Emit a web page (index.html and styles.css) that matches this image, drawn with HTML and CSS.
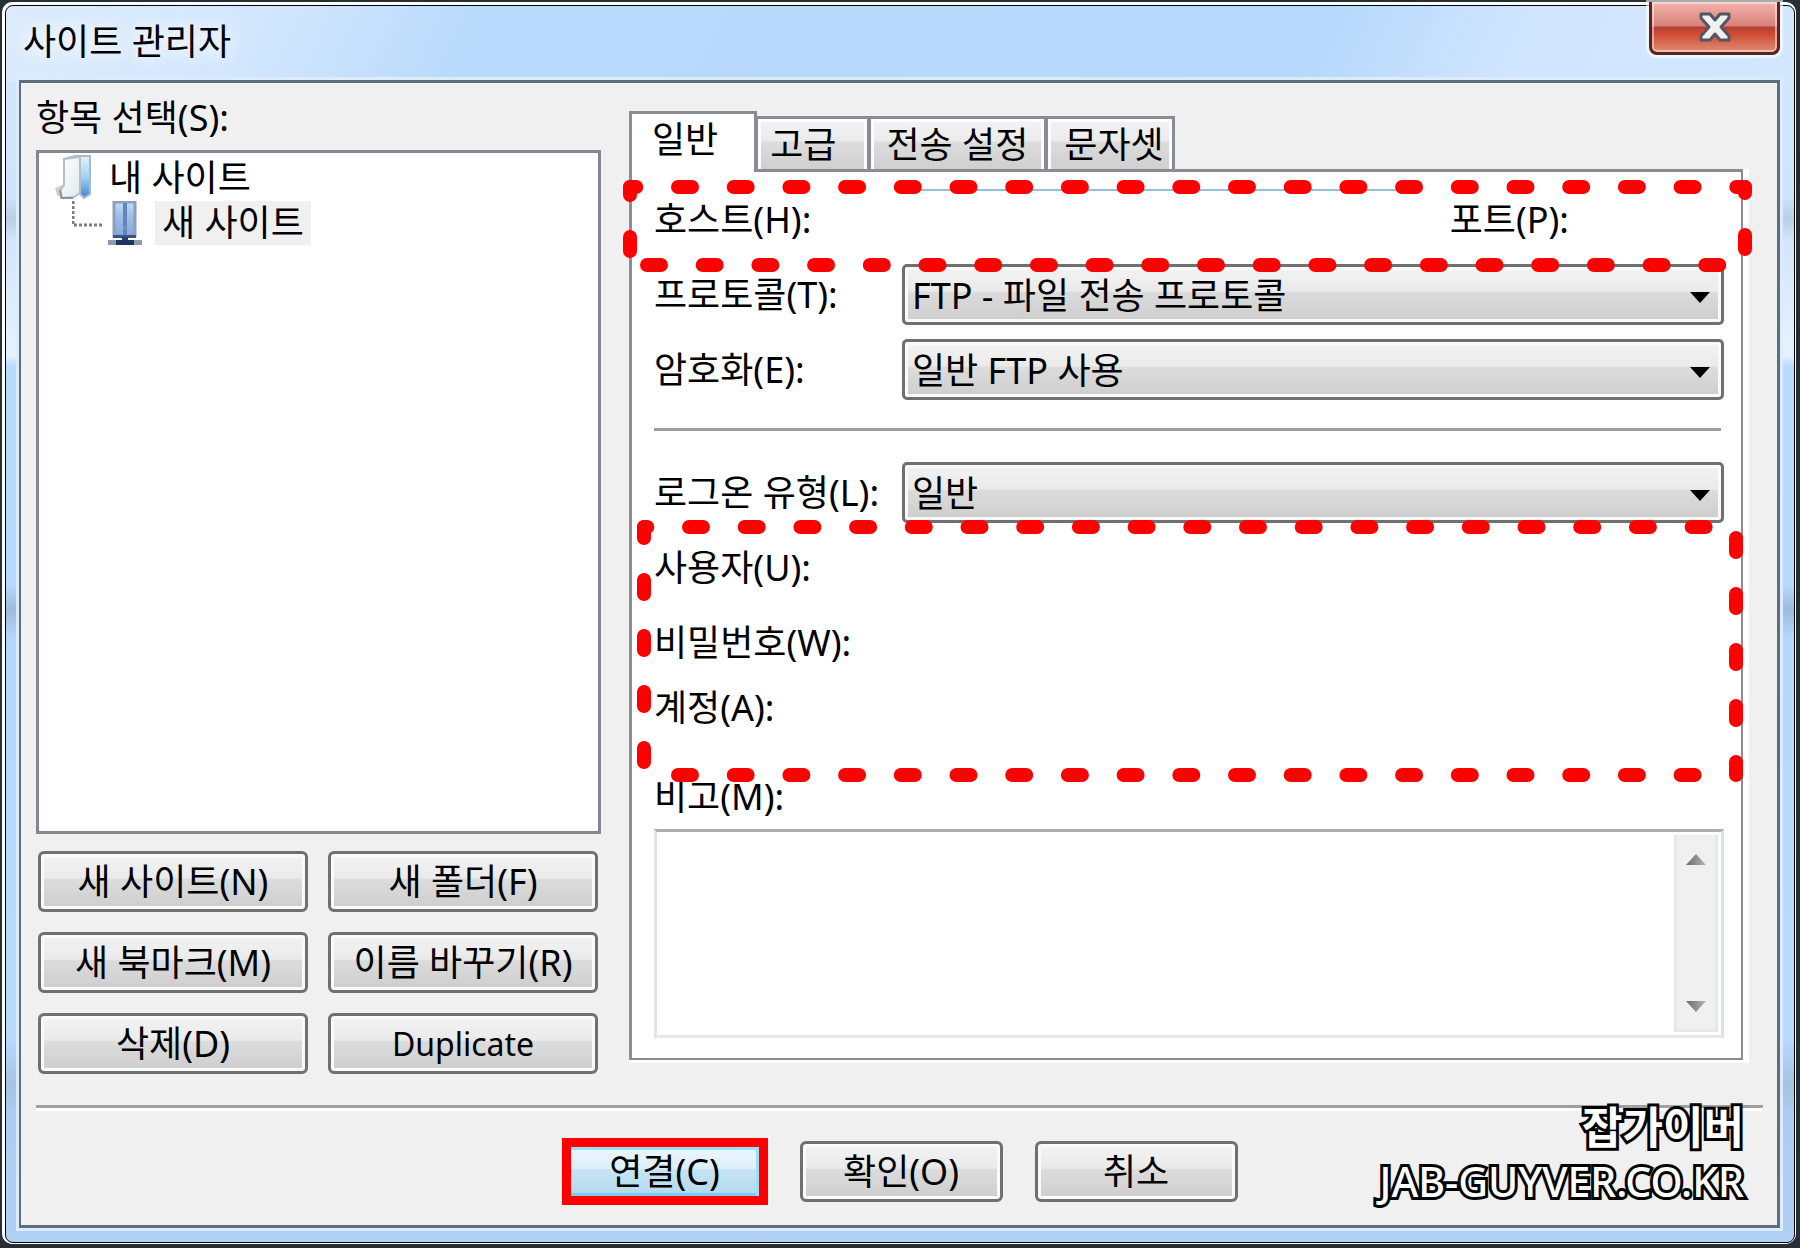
FILE: index.html
```html
<!DOCTYPE html>
<html lang="ko">
<head>
    <meta charset="UTF-8">
    <meta name="viewport" content="width=device-width, initial-scale=1.0">
    <title>사이트 관리자</title>
    <link rel="stylesheet" href="styles.css">
</head>
<body>

<div class="window">
    <div class="frame">
        <header class="titlebar">
            <h1>사이트 관리자</h1>
            <button type="button" class="close" aria-label="닫기">
                <svg width="32" height="30" viewBox="0 0 32 30">
                    <path d="M2 2H11L16 8L21 2H30V6L22 15L30 24V28H21L16 22L11 28H2V24L10 15L2 6Z" fill="#f1f1f1" stroke="#545666" stroke-width="3" stroke-linejoin="round"/>
                </svg>
            </button>
        </header>

        <main class="client">
            <div class="columns">
                <section class="sites">
                    <p class="caption">항목 선택(S):</p>
                    <ul class="tree">
                        <li class="node">
                            <svg class="folder" width="40" height="46" viewBox="0 0 40 46">
                                <defs>
                                    <linearGradient id="page" x1="0" y1="0" x2="1" y2="1">
                                        <stop offset="0" stop-color="#ffffff"/>
                                        <stop offset="1" stop-color="#dfeaf0"/>
                                    </linearGradient>
                                    <linearGradient id="flap" x1="0" y1="0" x2="0" y2="1">
                                        <stop offset="0" stop-color="#e2f3f8"/>
                                        <stop offset="0.5" stop-color="#a4d0f2"/>
                                        <stop offset="1" stop-color="#3f84d8"/>
                                    </linearGradient>
                                </defs>
                                <path d="M2 33L10 30V43L4 40Z" fill="#c9cdd0"/>
                                <path d="M11 4L22 1H37V39L31 43L26 38Z" fill="url(#flap)" stroke="#a9bcc4" stroke-width="2"/>
                                <path d="M11 4L27 2V38L21 42L8 43L7 36L11 30Z" fill="url(#page)" stroke="#b4c0c6" stroke-width="2"/>
                                <path d="M7 35L9 43H20" fill="none" stroke="#8796a2" stroke-width="2"/>
                            </svg>
                            <span class="node-name">내 사이트</span>
                        </li>
                        <li class="node child">
                            <svg class="branch" width="32" height="44" viewBox="0 0 32 44">
                                <path d="M1 0V24H32" fill="none" stroke="#7d7d7d" stroke-width="3" stroke-dasharray="3 2"/>
                            </svg>
                            <svg class="server" width="34" height="44" viewBox="0 0 34 44">
                                <defs>
                                    <linearGradient id="tower" x1="0" y1="0" x2="0" y2="1">
                                        <stop offset="0" stop-color="#bfe0ee"/>
                                        <stop offset="0.4" stop-color="#a3bdea"/>
                                        <stop offset="1" stop-color="#85a8de"/>
                                    </linearGradient>
                                </defs>
                                <rect x="6" y="1" width="21" height="34" fill="url(#tower)" stroke="#8e9fbd" stroke-width="3"/>
                                <path d="M17 2V34" stroke="#6484c0" stroke-width="4"/>
                                <path d="M17 25V28" stroke="#62a4a4" stroke-width="3"/>
                                <path d="M5 34H28V37H5Z" fill="#3a5584"/>
                                <path d="M14 36H20V40H14Z" fill="#27426f"/>
                                <path d="M0 39H34V44H0Z" fill="#8d9cac"/>
                                <path d="M8 39H26V44H8Z" fill="#1e365f"/>
                            </svg>
                            <span class="node-name selected">새 사이트</span>
                        </li>
                    </ul>
                    <div class="actions">
                        <button type="button" class="btn">새 사이트(N)</button>
                        <button type="button" class="btn">새 폴더(F)</button>
                        <button type="button" class="btn">새 북마크(M)</button>
                        <button type="button" class="btn">이름 바꾸기(R)</button>
                        <button type="button" class="btn">삭제(D)</button>
                        <button type="button" class="btn latin">Duplicate</button>
                    </div>
                </section>

                <section class="settings">
                    <div class="tabs" role="tablist">
                        <button type="button" class="tab active" role="tab" aria-selected="true">일반</button>
                        <button type="button" class="tab" role="tab">고급</button>
                        <button type="button" class="tab" role="tab">전송 설정</button>
                        <button type="button" class="tab" role="tab">문자셋</button>
                    </div>
                    <form class="panel">
                        <div class="row">
                            <label for="host">호스트(H):</label>
                            <input type="text" id="host" class="host">
                            <label for="port" class="port-label">포트(P):</label>
                            <input type="text" id="port" class="port">
                        </div>
                        <div class="row">
                            <label for="protocol">프로토콜(T):</label>
                            <div class="combo">
                                <select id="protocol"><option>FTP - 파일 전송 프로토콜</option></select>
                            </div>
                        </div>
                        <div class="row">
                            <label for="encryption">암호화(E):</label>
                            <div class="combo">
                                <select id="encryption"><option>일반 FTP 사용</option></select>
                            </div>
                        </div>
                        <hr class="divider">
                        <div class="row">
                            <label for="logon">로그온 유형(L):</label>
                            <div class="combo">
                                <select id="logon"><option>일반</option></select>
                            </div>
                        </div>
                        <div class="row">
                            <label for="user">사용자(U):</label>
                            <input type="text" id="user">
                        </div>
                        <div class="row">
                            <label for="password">비밀번호(W):</label>
                            <input type="password" id="password">
                        </div>
                        <div class="row short">
                            <label for="account">계정(A):</label>
                            <input type="text" id="account">
                        </div>
                        <label for="memo" class="memo-label">비고(M):</label>
                        <div class="memo">
                            <textarea id="memo"></textarea>
                            <div class="scrollbar">
                                <span class="arrow up"></span>
                                <span class="arrow down"></span>
                            </div>
                        </div>

                        <!-- red dotted markers -->
                        <svg class="marker marker-host">
                            <line x1="0" y1="0" x2="100%" y2="0" stroke-dasharray="14 41.7" stroke-dashoffset="7.7"/>
                            <line x1="17" y1="78" x2="100%" y2="78" stroke-dasharray="14 41.7"/>
                            <line x1="0" y1="0" x2="0" y2="78" stroke-dasharray="14 42" stroke-dashoffset="6"/>
                            <line x1="100%" y1="0" x2="100%" y2="70" stroke-dasharray="14 42" stroke-dashoffset="8"/>
                        </svg>
                        <svg class="marker marker-login">
                            <line x1="0" y1="0" x2="100%" y2="0" stroke-dasharray="14 41.7" stroke-dashoffset="10.7"/>
                            <line x1="34" y1="248" x2="100%" y2="248" stroke-dasharray="14 41.7"/>
                            <line x1="0" y1="0" x2="0" y2="240" stroke-dasharray="14 42" stroke-dashoffset="3"/>
                            <line x1="100%" y1="11" x2="100%" y2="248" stroke-dasharray="14 42"/>
                        </svg>
                    </form>
                </section>
            </div>

            <hr class="separator">

            <footer class="buttons">
                <button type="submit" class="btn connect">연결(C)</button>
                <button type="button" class="btn">확인(O)</button>
                <button type="button" class="btn">취소</button>
            </footer>

            <div class="watermark">
                <p class="mark-name">잡가이버</p>
                <p class="mark-site">JAB-GUYVER.CO.KR</p>
            </div>
        </main>
    </div>
</div>

</body>
</html>
```

FILE: styles.css
```css
* {
    box-sizing: border-box;
}

body {
    margin: 0;
    min-height: 100vh;
    display: flex;
    padding: 2px 4px 4px 2px;
    background-color: #262e36;
    color: #000;
    font-family: "Noto Sans", "Noto Sans CJK KR", sans-serif;
    font-size: 36px;
    line-height: 44px;
}

h1, p, ul, hr {
    margin: 0;
    padding: 0;
}

button, input, select, textarea {
    font: inherit;
    color: inherit;
}

/* window frame */
.window {
    flex: 1;
    display: flex;
    border: solid #fff;
    border-width: 3px 1px 1px 3px;
    border-radius: 10px;
    background-color: #fff;
}

.frame {
    flex: 1;
    min-width: 0;
    display: flex;
    flex-direction: column;
    padding: 0 14px 14px 13px;
    border: 1px solid #000;
    border-radius: 8px;
    background:
        linear-gradient(115deg, #dcecfd 0, #d3e7fd 230px, #b9dafc 440px, #b6d8fc 1200px, #d1e6fe 1400px, #d3e8ff 100%) top / 100% 76px no-repeat,
        linear-gradient(#d3e7fe 0, #cfe4fc 190px, #b9cfe6 212px, #d3e6fc 235px, #e6f2fe 350px, #b9dbff 360px, #b6d8fc 580px, #9dbbdc 604px, #b4d6fb 630px, #b9dbff 1030px, #a4c2e2 1080px, #aeccf0 1110px, #afd1f5 100%);
}

.titlebar {
    position: relative;
    display: flex;
    height: 74px;
    padding: 14px 0 0 4px;
}

.titlebar h1 {
    font-size: 36px;
    font-weight: 400;
    text-shadow: 0 0 16px #fff, 0 0 24px #fff;
}

.close {
    position: absolute;
    top: -4px;
    right: 0;
    width: 131px;
    height: 53px;
    padding: 0;
    border: 3px solid #5a2320;
    border-top: 0;
    border-radius: 0 0 8px 8px;
    background: linear-gradient(#f3b5ae 0, #d98078 48%, #ab4238 50%, #cf4733 62%, #df8e72 100%);
    box-shadow: inset 0 0 0 2px rgba(255, 255, 255, 0.45), 0 0 0 3px rgba(255, 255, 255, 0.6);
}

.close svg {
    display: block;
    margin: 0 auto;
}

.client {
    position: relative;
    flex: 1;
    display: flex;
    flex-direction: column;
    padding: 13px 14px 20px 15px;
    border: solid #5e6e7e;
    border-width: 3px 3px 3px 2px;
    background-color: #f0f0f0;
    box-shadow: 0 0 0 3px #dcecfc;
}

.columns {
    flex: 1;
    display: flex;
    gap: 28px;
    padding-right: 20px;
}

/* left side */
.sites {
    flex: 0 0 565px;
    display: flex;
    flex-direction: column;
}

.caption {
    margin-bottom: 10px;
}

.tree {
    flex: 1;
    padding: 2px 0 0 14px;
    border: 3px solid #828790;
    background-color: #fff;
    list-style: none;
}

.node {
    display: flex;
    align-items: center;
    height: 45px;
}

.folder {
    margin-right: 9px;
}

.branch {
    margin-left: 19px;
    margin-right: 4px;
}

.server {
    margin-right: 13px;
}

.node-name {
    padding: 0 7px;
}

.selected {
    background-color: #f0f0f0;
}

.actions {
    display: grid;
    grid-template-columns: 1fr 1fr;
    gap: 20px;
    padding: 17px 3px 0 2px;
}

.btn {
    height: 61px;
    padding: 0;
    border: 3px solid #707070;
    border-radius: 6px;
    background: linear-gradient(#f3f3f3 0, #eaeaea 44%, #dcdcdc 46%, #cdcdcd 100%);
    box-shadow: inset 0 0 0 3px #fafafa;
    text-align: center;
    white-space: nowrap;
}

.latin {
    font-size: 32px;
}

/* right side */
.settings {
    flex: 1;
    min-width: 0;
    display: flex;
    flex-direction: column;
    padding: 15px 0 14px;
}

.tabs {
    position: relative;
    z-index: 1;
    display: flex;
    align-items: flex-end;
    margin-bottom: -3px;
}

.tab {
    height: 56px;
    padding: 2px 16px 0;
    border: 3px solid #898c95;
    margin-right: -2px;
    background: linear-gradient(#f3f3f3 0, #ebebeb 44%, #dddddd 46%, #cfcfcf 100%);
    box-shadow: inset 0 3px 0 #fcfcfc, inset 3px 0 0 #fcfcfc, inset -3px 0 0 #fcfcfc;
}

.tab:nth-child(2) {
    padding: 2px 30px 0 12px;
}

.tab:last-child {
    padding-right: 8px;
}

.tab.active {
    height: 61px;
    padding: 0 36px 6px 20px;
    border-bottom: 0;
    background: #fff;
    box-shadow: none;
}

.panel {
    position: relative;
    flex: 1;
    display: flex;
    flex-direction: column;
    gap: 14px;
    padding: 17px 17px 20px 22px;
    border: 3px solid #898c95;
    border-width: 3px 2px 2px 3px;
    background-color: #fff;
    box-shadow: 6px 0 0 #fff, 6px 3px 0 #fff, 0 3px 0 #fff;
}

.row {
    display: flex;
    align-items: center;
    height: 61px;
}

.row.short {
    height: 41px;
}

.row label:first-child {
    flex: 0 0 248px;
    white-space: nowrap;
}

.row input {
    flex: 1;
    min-width: 0;
    height: 100%;
    padding: 0 8px;
    border: 0;
    background: transparent;
    outline: none;
}

.row .host {
    border-top: 2px solid #9dbcd6;
}

.row .port-label {
    margin-left: 38px;
}

.row .port {
    flex: 0 0 145px;
    margin-left: 10px;
}

.combo {
    position: relative;
    flex: 1;
    height: 100%;
}

.combo select {
    appearance: none;
    display: block;
    width: 100%;
    height: 100%;
    padding: 2px 50px 0 7px;
    border: 3px solid #707070;
    border-radius: 5px;
    background: linear-gradient(#f3f3f3 0, #eaeaea 44%, #dcdcdc 46%, #cdcdcd 100%);
    box-shadow: inset 0 0 0 3px #fafafa;
}

.combo::after {
    content: "";
    position: absolute;
    top: 28px;
    right: 14px;
    width: 20px;
    height: 11px;
    background-color: #000;
    clip-path: polygon(0 0, 100% 0, 50% 100%);
    pointer-events: none;
}

.divider {
    flex-shrink: 0;
    height: 3px;
    margin: 14px 3px 17px 0;
    border: 0;
    background-color: #a0a0a0;
}

.memo-label {
    margin-top: 33px;
}

.memo {
    flex: 1;
    display: flex;
    margin-top: -4px;
    padding: 3px;
    border: 3px solid;
    border-color: #abadb3 #dbdfe6 #e3e9ef #e2e3ea;
}

.memo textarea {
    flex: 1;
    min-width: 0;
    height: 100%;
    padding: 4px;
    border: 0;
    background: transparent;
    outline: none;
    resize: none;
}

.scrollbar {
    display: flex;
    flex-direction: column;
    justify-content: space-between;
    align-items: center;
    width: 44px;
    padding: 19px 0 17px;
    border: 3px solid #e8e8e8;
    border-top: 0;
    background-color: #f0f0f0;
}

.arrow {
    width: 20px;
    height: 11px;
    background: linear-gradient(90deg, #6a6a6a, #b4b4b4);
}

.up {
    clip-path: polygon(0 100%, 100% 100%, 50% 0);
}

.down {
    clip-path: polygon(0 0, 100% 0, 50% 100%);
}

.marker {
    position: absolute;
    overflow: visible;
    pointer-events: none;
    stroke: #f00;
    stroke-width: 14px;
    stroke-linecap: round;
}

.marker-host {
    top: 15px;
    left: -2px;
    width: calc(100% + 6px);
    height: 78px;
}

.marker-login {
    top: 355px;
    left: 12px;
    width: calc(100% - 17px);
    height: 248px;
}

/* bottom */
.separator {
    height: 6px;
    margin-top: 31px;
    border: solid;
    border-width: 3px 0;
    border-color: #a0a0a0 transparent #fff;
}

.buttons {
    display: flex;
    justify-content: center;
    align-items: center;
    gap: 32px;
    padding-top: 27px;
}

.buttons .btn {
    width: 203px;
}

.buttons .connect {
    width: 206px;
    height: 67px;
    border: 9px solid #f00;
    border-radius: 0;
    background: linear-gradient(#ecf6fc 0, #dceffa 44%, #c6e4f3 46%, #b3d8ec 100%);
    box-shadow: inset 0 3px 0 #98e0f8, inset -3px 0 0 #98e0f8, inset 0 -3px 0 #74d0f0;
}

.watermark {
    position: absolute;
    right: 33px;
    bottom: 18px;
    color: #fff;
    text-align: right;
    -webkit-text-stroke: 6px #000;
    paint-order: stroke fill;
    pointer-events: none;
}

.mark-name {
    font-size: 44px;
    line-height: 56px;
    font-weight: 700;
}

.mark-site {
    font-size: 41px;
    line-height: 52px;
    font-weight: 500;
}
```
